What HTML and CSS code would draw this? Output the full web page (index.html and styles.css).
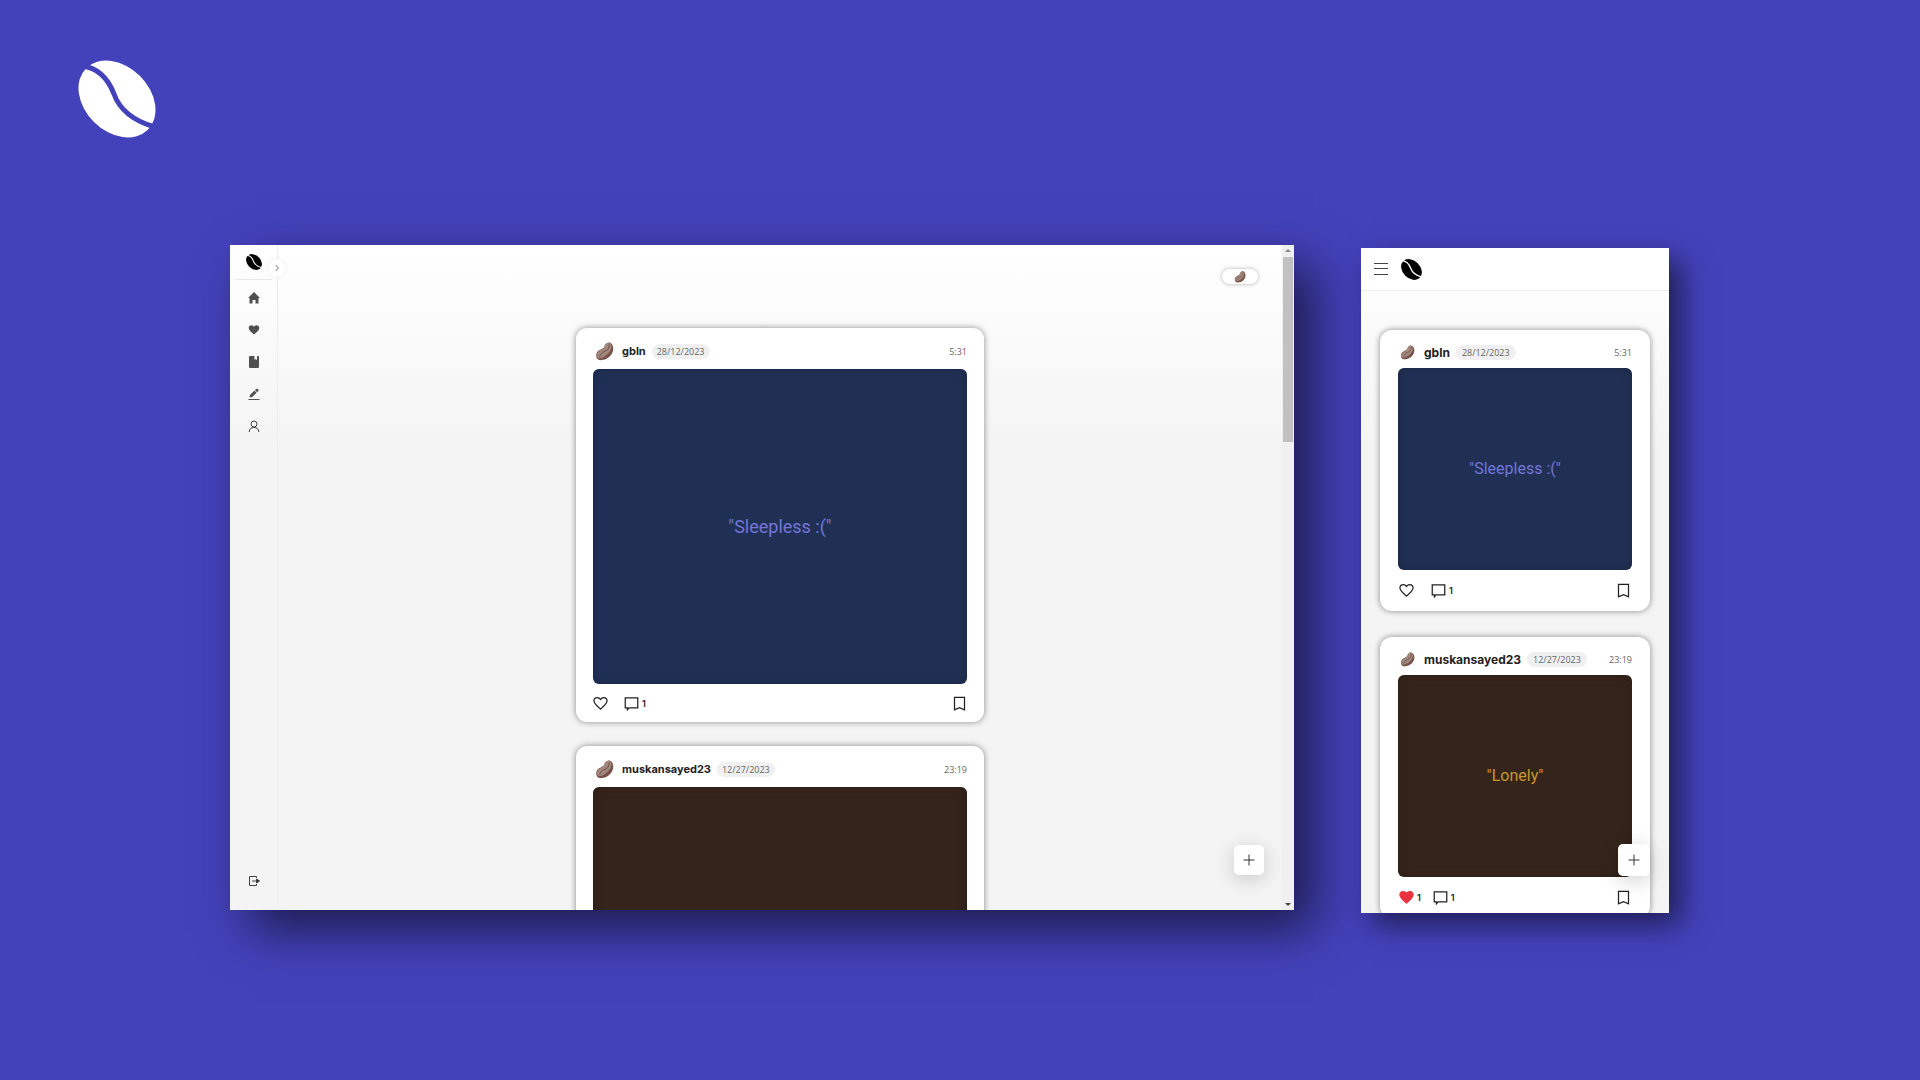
FILE: index.html
```html
<!DOCTYPE html>
<html lang="en">
<head>
<meta charset="utf-8">
<meta name="viewport" content="width=device-width, initial-scale=1">
<title>Bean feed</title>
<link rel="stylesheet" href="styles.css">
</head>
<body>
<svg class="sprite" aria-hidden="true">
  <mask id="seam" maskUnits="userSpaceOnUse" x="0" y="0" width="78" height="78">
    <rect width="78" height="78" fill="#fff"/>
    <path d="M4 6C22 8 31 21 36 34C41 48 52 60 77 67" fill="none" stroke="#000" stroke-width="5"/>
  </mask>
  <symbol id="logo" viewBox="0 0 78 78">
    <g mask="url(#seam)"><ellipse cx="39" cy="39" rx="43.600" ry="32.600" transform="rotate(45 39 39)"/></g>
  </symbol>
  <symbol id="bean" viewBox="0 0 20 20">
    <path fill="#765249" d="M13 1C17-1 20 4 19 9C18 14 13 19 7 19C2 20 0 15 2 11C4 8 9 7 10 5C10 3 11 2 13 1Z"/>
    <path fill="#a1887f" d="M13 1C17 0 18 4 17 7C15 12 9 17 4 17C1 16 1 13 3 11C5 8 9 8 10 5C10 3 11 2 13 1Z"/>
    <path fill="none" stroke="#6d4c41" stroke-linecap="round" d="M15 3C15 7 13 9 10 10C7 11 6 13 5 15"/>
  </symbol>
  <symbol id="heart" viewBox="0 0 24 24"><path d="M12 21C5 15 1.500 12 1.500 8C1.500 4.500 4 2.500 7 2.500C9.500 2.500 11 4 12 5.500C13 4 14.500 2.500 17 2.500C20 2.500 22.500 4.500 22.500 8C22.500 12 19 15 12 21Z"/></symbol>
  <symbol id="comment" viewBox="0 0 24 24"><path d="M2 3H22V19H8L5.500 22V19H2Z"/></symbol>
  <symbol id="mark" viewBox="0 0 24 24"><path d="M4 2H20V22L12 18.500L4 22Z"/></symbol>
  <symbol id="plus" viewBox="0 0 24 24"><path d="M12 1V23M1 12H23"/></symbol>
</svg>

<header class="brand"><svg class="brand-logo"><use href="#logo"/></svg></header>

<main class="stage">
  <section class="window desktop" aria-label="Desktop view">
    <nav class="sidebar" aria-label="Main">
      <a class="side-logo" href="#" aria-label="Start"><svg><use href="#logo"/></svg></a>
      <div class="side-links">
        <a href="#" aria-label="Home"><svg viewBox="0 0 12 12"><path d="M6 0L12 6H10.500V11.500H7.500V8H4.500V11.500H1.500V6H0Z"/></svg></a>
        <a href="#" aria-label="Likes"><svg viewBox="0 0 24 24"><use href="#heart"/></svg></a>
        <a href="#" aria-label="Saved"><svg viewBox="0 0 12 12"><path fill-rule="evenodd" d="M2 0H10Q11 0 11 1V11Q11 12 10 12H2Q1 12 1 11V1Q1 0 2 0ZM6.500 0V4L7.700 3L9 4V0Z"/></svg></a>
        <a href="#" aria-label="Write"><svg viewBox="0 0 12 12"><path d="M.5 11H11.500V12H.5ZM1.500 9.500L2 7L6.400 2.600L8.600 4.800L4.200 9ZM7 2L8 1Q9 .2 10 1.200Q11 2.200 10.200 3.200L9.200 4.200Z"/></svg></a>
        <a href="#" aria-label="Profile"><svg class="line" viewBox="0 0 12 12"><circle cx="6" cy="4" r="3"/><path d="M1.200 12C1.200 9 3 7.500 6 7.500S10.800 9 10.800 12"/></svg></a>
      </div>
      <a class="logout" href="#" aria-label="Log out"><svg class="line" viewBox="0 0 12 12"><path d="M8.500 3V1.500H1.500V10.500H8.500V9M4 6H10"/><path class="solid" d="M8.500 4L11.500 6L8.500 8Z"/></svg></a>
      <button class="toggle" aria-label="Expand menu"><svg class="line" viewBox="0 0 12 12"><path d="M4 2L8 6L4 10"/></svg></button>
    </nav>
    <div class="feed">
      <article class="card">
        <header class="card-head"><svg class="avatar"><use href="#bean"/></svg><strong>gbln</strong><span class="date">28/12/2023</span><time>5:31</time></header>
        <div class="note blue">"Sleepless :("</div>
        <footer class="actions"><button aria-label="Like"><svg><use href="#heart"/></svg></button><button><svg><use href="#comment"/></svg>1</button><button class="save" aria-label="Save"><svg><use href="#mark"/></svg></button></footer>
      </article>
      <article class="card">
        <header class="card-head"><svg class="avatar"><use href="#bean"/></svg><strong>muskansayed23</strong><span class="date">12/27/2023</span><time>23:19</time></header>
        <div class="note brown"></div>
      </article>
    </div>
    <div class="scrollbar"><i class="arrow up"></i><i class="thumb"></i><i class="arrow down"></i></div>
    <button class="account" aria-label="Account"><svg><use href="#bean"/></svg></button>
    <button class="fab" aria-label="New post"><svg><use href="#plus"/></svg></button>
  </section>

  <section class="window mobile" aria-label="Mobile view">
    <header class="topbar">
      <button aria-label="Menu"><svg class="menu" viewBox="0 0 14 14"><path d="M0 1.500H14M0 6.500H14M0 12.500H14"/></svg></button>
      <svg class="top-logo"><use href="#logo"/></svg>
    </header>
    <div class="feed">
      <article class="card">
        <header class="card-head"><svg class="avatar"><use href="#bean"/></svg><strong>gbln</strong><span class="date">28/12/2023</span><time>5:31</time></header>
        <div class="note blue">"Sleepless :("</div>
        <footer class="actions"><button aria-label="Like"><svg><use href="#heart"/></svg></button><button><svg><use href="#comment"/></svg>1</button><button class="save" aria-label="Save"><svg><use href="#mark"/></svg></button></footer>
      </article>
      <article class="card">
        <header class="card-head"><svg class="avatar"><use href="#bean"/></svg><strong>muskansayed23</strong><span class="date">12/27/2023</span><time>23:19</time></header>
        <div class="note brown">"Lonely"</div>
        <footer class="actions liked"><button><svg class="red"><use href="#heart"/></svg>1</button><button><svg><use href="#comment"/></svg>1</button><button class="save" aria-label="Save"><svg><use href="#mark"/></svg></button></footer>
      </article>
    </div>
    <button class="fab" aria-label="New post"><svg><use href="#plus"/></svg></button>
  </section>
</main>
</body>
</html>
```
FILE: styles.css
```css
* { box-sizing: border-box; }
body {
  margin: 0;
  min-height: 100vh;
  background: #4442bb;
  font-family: Inter, "Liberation Sans", sans-serif;
  color: #222;
}
svg { display: block; }
button {
  display: flex;
  align-items: center;
  justify-content: center;
  padding: 0;
  border: 0;
  background: none;
  color: inherit;
  font: inherit;
}
.sprite { position: absolute; width: 0; height: 0; }

.brand { padding: 60px 78px 107px; }
.brand-logo { width: 78px; height: 78px; fill: #fff; }

.stage {
  display: grid;
  grid-template-columns: minmax(0, 1064fr) minmax(0, 308fr);
  align-items: start;
  gap: 67px;
  padding: 0 251px 100px 230px;
}
.window {
  position: relative;
  display: flex;
  min-height: 0;
  background: linear-gradient(#fff, #f4f4f4 200px);
}
.desktop { aspect-ratio: 1064 / 665; box-shadow: 20px 20px 48px rgba(0, 0, 0, .6); }
.mobile {
  aspect-ratio: 308 / 665;
  margin-top: 3px;
  flex-direction: column;
  box-shadow: 12px 12px 28px rgba(0, 0, 0, .55);
}

.sidebar {
  position: relative;
  z-index: 1;
  display: flex;
  flex-direction: column;
  width: 48px;
  padding: 0 5px 17px;
  border-right: 1px solid #eee;
}
.sidebar a { display: flex; align-items: center; justify-content: center; }
.sidebar svg { width: 12px; height: 12px; fill: #505050; }
.sidebar .side-logo { height: 35px; border-bottom: 1px solid #e8e8e8; }
.sidebar .side-logo svg { width: 16px; height: 16px; fill: #000; }
.side-links { padding-top: 2px; }
.side-links a { height: 32px; }
.logout { margin-top: auto; height: 24px; }
.sidebar .line { fill: none; stroke: #444; stroke-width: 1; }
.sidebar .solid { fill: #222; }
.toggle {
  position: absolute;
  top: 14px;
  right: -9px;
  width: 18px;
  height: 18px;
  border-radius: 50%;
  background: #fff;
  box-shadow: 0 0 3px rgba(0, 0, 0, .1);
}
.sidebar .toggle svg { width: 8px; height: 8px; stroke: #aaa; stroke-width: 2; }

.feed {
  flex: 1;
  min-height: 0;
  display: flex;
  flex-direction: column;
  align-items: center;
  overflow: hidden;
}
.desktop .feed { height: 0; min-height: 100%; padding-top: 83px; gap: 24px; }
.mobile .feed { padding: 38px 19px 0; gap: 26px; }
.card {
  flex: none;
  width: 408px;
  max-width: 100%;
  padding: 14px 17px 0;
  border-radius: 11px;
  background: #fff;
  box-shadow: 0 0 6px rgba(0, 0, 0, .45);
}
.mobile .card { padding: 12px 18px 0; border-radius: 12px; }
.card-head { display: flex; align-items: center; height: 27px; padding: 0 0 8px 2px; }
.mobile .card-head { height: 26px; padding-bottom: 6px; }
.avatar { width: 19px; height: 19px; margin-right: 8px; }
.mobile .avatar { width: 15px; height: 15px; margin-right: 9px; }
.card-head strong { font-size: 11px; line-height: 15px; }
.mobile .card-head strong { font-size: 12px; }
.date {
  margin-left: 6px;
  padding: 0 5px;
  border-radius: 8px;
  background: #f0f0f0;
  color: #666;
  font: 9px/15px "Open Sans", sans-serif;
}
.mobile .date { padding: 0 6px; }
time { margin-left: auto; color: #666; font: 9px/15px "Open Sans", sans-serif; }
.note {
  display: flex;
  align-items: center;
  justify-content: center;
  height: 315px;
  border-radius: 6px;
  font: 18px/24px Roboto, sans-serif;
  box-shadow: inset 0 0 12px rgba(0, 0, 0, .2);
}
.mobile .note { height: 202px; font-size: 16px; }
.blue { background: #203055; color: #7475d8; }
.brown { background: #35241b; color: #c9972b; }
.actions { display: flex; align-items: center; height: 38px; gap: 16px; }
.mobile .actions { height: 41px; padding: 0 1px; gap: 17px; }
.mobile .liked { gap: 12px; }
.actions button { gap: 3px; font-size: 9px; font-weight: 600; }
.actions svg { width: 15px; height: 15px; fill: none; stroke: #222; stroke-width: 2; }
.actions .save { margin-left: auto; }
.actions .red { fill: #e8333f; stroke: #e8333f; }

.scrollbar {
  display: flex;
  flex-direction: column;
  width: 12px;
  padding: 4px 0;
  background: #f0f0f0;
}
.arrow { align-self: center; border: 3px solid transparent; }
.up { border-bottom-color: #888; margin-bottom: 2px; border-top: 0; }
.down { border-top-color: #444; border-bottom: 0; margin-top: auto; }
.thumb { margin: 3px 1px 0; height: 185px; background: #c1c1c1; }

.account {
  position: absolute;
  top: 24px;
  right: 36px;
  width: 36px;
  height: 15px;
  border-radius: 8px;
  background: #fff;
  box-shadow: 0 0 4px rgba(0, 0, 0, .3);
}
.account svg { width: 12px; height: 12px; }
.fab {
  position: absolute;
  right: 30px;
  bottom: 35px;
  width: 30px;
  height: 30px;
  border-radius: 5px;
  background: #fff;
  box-shadow: 0 4px 20px rgba(0, 0, 0, .18);
}
.mobile .fab { right: 19px; bottom: 37px; width: 32px; height: 32px; }
.fab svg { width: 12px; height: 12px; stroke: #333; stroke-width: 2; }

.topbar {
  display: flex;
  align-items: center;
  gap: 13px;
  height: 43px;
  padding: 0 13px;
  background: #fff;
  border-bottom: 1px solid #eee;
}
.mobile .topbar + .feed { padding-top: 39px; }
.menu { width: 14px; height: 14px; stroke: #444; stroke-width: 1; }
.top-logo { width: 21px; height: 21px; }
```
